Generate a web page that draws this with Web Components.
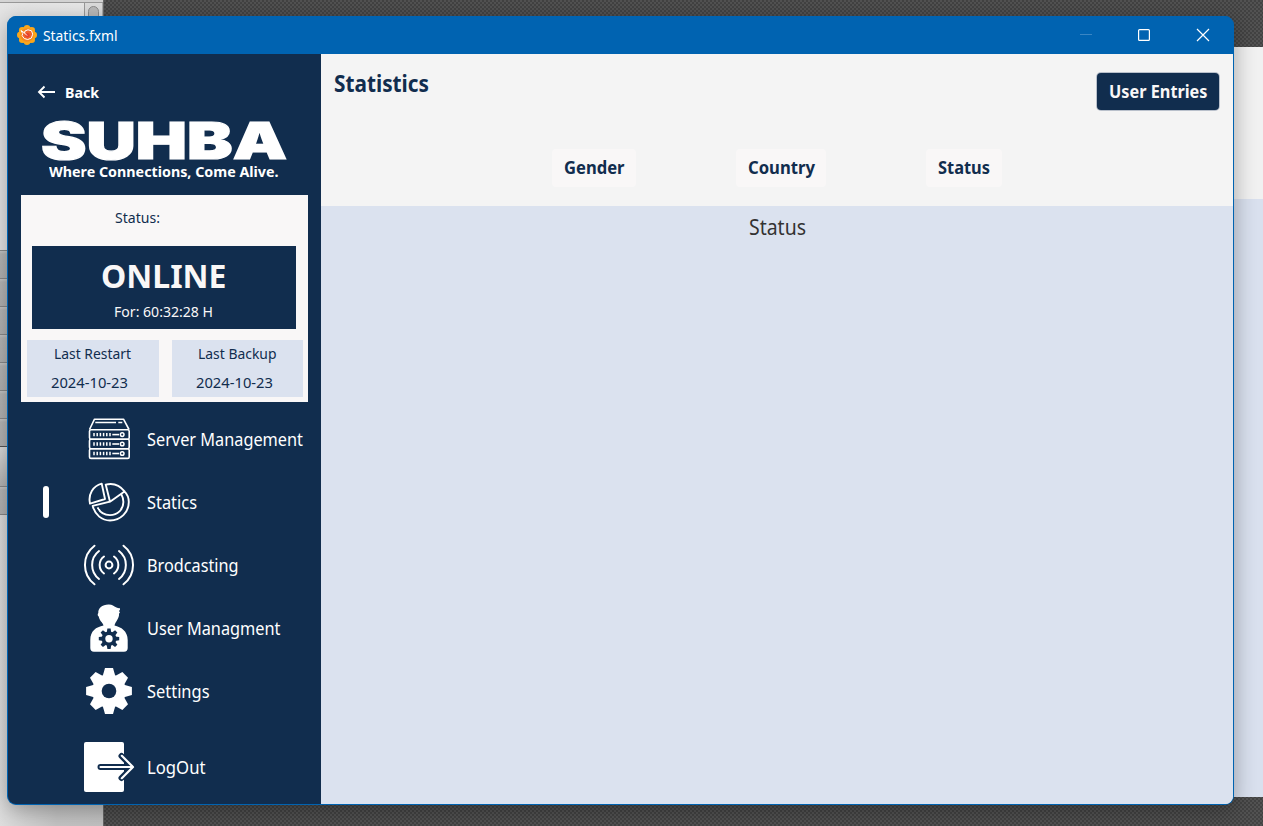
<!DOCTYPE html>
<html lang="en"><head><meta charset="utf-8"><title>Statics.fxml</title>
<style>html,body{margin:0;width:1263px;height:826px;overflow:hidden;font-family:"Noto Sans","Open Sans",sans-serif}</style></head>
<body>
<desk-top><app-window>
<title-bar slot="title"></title-bar>
<side-bar slot="side"></side-bar>
<stats-page slot="page"></stats-page>
</app-window></desk-top>
<script>
const define=(name,html,after)=>{
  const t=document.createElement('template');t.innerHTML=html;
  customElements.define(name,class extends HTMLElement{
    connectedCallback(){if(this.shadowRoot)return;
      this.attachShadow({mode:'open'}).append(t.content.cloneNode(true));
      if(after)after.call(this,this.shadowRoot);}
  });
};

/* One line of text, drawn to an exact width: w, size, weight, height */
define('fit-text',`<style>:host{display:block;white-space:nowrap;flex:none}span{display:inline-block;transform-origin:0 50%}</style><span><slot></slot></span>`,
function(r){
  const s=r.querySelector('span'),g=n=>this.getAttribute(n);
  this.style.width=g('w')+'px';
  this.style.fontSize=g('size')+'px';
  this.style.fontWeight=g('weight')||400;
  this.style.height=this.style.lineHeight=(g('h')||20)+'px';
  const n=s.offsetWidth?s.getBoundingClientRect().width:0;
  if(n)s.style.transform='scaleX('+(+g('w')/n)+')';
});

define('desk-top',`<style>
:host{display:grid;grid-template-columns:103px 1fr;width:1263px;height:826px;position:relative;overflow:hidden}
.left{display:flex;flex-direction:column;background:linear-gradient(90deg,#e2e2e2,#c8c8c8)}
.bar{height:2px;background:#d4d4d4;border-bottom:1px solid #999}
.top{height:247px;display:flex;justify-content:flex-end;background:linear-gradient(90deg,#e5e5e5,#e9e9e9)}
.scroll{width:19px;border-left:1px solid #999;border-right:1px solid #aaa;box-sizing:border-box;background:#ddd;display:flex;justify-content:center;padding-top:3px}
.thumb{width:9px;height:60px;border:1px solid #8c8c8c;border-radius:6px;background:#bbb}
.row{height:27px;border-top:1px solid #8b8b8b;background:linear-gradient(#c9c9c9,#b8b8b8 3px,#b3b3b3)}
.mid{height:39px;border-top:1px solid #555;background:linear-gradient(#ddd,#b5b5b5)}
.low{flex:1;border-top:1px solid #888;background:linear-gradient(90deg,#dedede,#c4c4c4 55%,#c2c2c2)}
.right{display:flex;flex-direction:column;align-items:flex-end;background-color:#474747;
 background-image:conic-gradient(#424242 25%,#525252 0 50%,#424242 0 75%,#525252 0);background-size:4px 4px;border-left:1px solid #666}
.gap{height:47px}.a{width:60px;height:152px;background:#f1f1f1}.b{width:60px;height:598px;background:#d9e0ee}
</style>
<div class="left"><div class="bar"></div><div class="top"><div class="scroll"><div class="thumb"></div></div></div>
<div class="row"></div><div class="row"></div><div class="row"></div><div class="row"></div><div class="row"></div><div class="row"></div><div class="row"></div>
<div class="mid"></div><div class="row"></div><div class="low"></div></div>
<div class="right"><div class="gap"></div><div class="a"></div><div class="b"></div></div><slot></slot>`);

define('app-window',`<style>
:host{position:absolute;left:7px;top:16px;width:1227px;height:789px;box-sizing:border-box;border:1px solid #0063b1;border-top:0;border-radius:9px;overflow:hidden;background:#0063b1;
display:grid;grid-template:38px 1fr/313px 1fr;box-shadow:0 5px 22px rgba(0,0,0,.32)}
.t{grid-column:1/3}
</style><div class="t"><slot name="title"></slot></div><slot name="side"></slot><slot name="page"></slot>`);

define('title-bar',`<style>
:host{display:flex;height:38px;align-items:center;background:#0063b1;color:#fff;padding-left:9px}
fit-text{margin:0 0 0 5.5px}svg{display:block}.logo{margin-top:0}.ctl{margin-left:auto}
</style>
<svg class="logo" width="20" height="20" viewBox="0 0 20 20"><g fill="#f9a61a"><circle cx="10" cy="10" r="8.6"/><circle cx="10" cy="3.2" r="3.2"/><circle cx="14.800" cy="5.200" r="3.2"/><circle cx="16.800" cy="10" r="3.2"/><circle cx="14.800" cy="14.800" r="3.2"/><circle cx="10" cy="16.800" r="3.2"/><circle cx="5.200" cy="14.800" r="3.2"/><circle cx="3.200" cy="10" r="3.2"/><circle cx="5.200" cy="5.200" r="3.2"/></g><circle cx="10" cy="10" r="6.8" fill="#f58a20"/><path d="M4 5.5 7.5 8 8 6l3-1.200 3.500 1 1.200 3.400-1.300 3.800-3.600 1.500-3.500-1-2.200-2.800.6-2.200z" fill="#f0642a" stroke="#fff" stroke-width="1"/><circle cx="10.500" cy="10.200" r="2.200" fill="#e6402e"/><path d="m7.500 8 2.500 2.500" stroke="#fff"/></svg>
<fit-text w="74.5" size="14.6">Statics.fxml</fit-text>
<svg class="ctl" width="154" height="38" fill="none" stroke="#fff"><path d="M1 18.5h12" stroke="#3a86c4"/><rect x="59.6" y="13.6" width="10.8" height="10.8" rx="1" stroke-width="1.2"/><path d="m118 13 12 12m0-12-12 12" stroke-width="1.2"/></svg>`);

define('side-bar',`<style>
:host{display:flex;flex-direction:column;background:#112d4e;color:#fff;height:750px}
.back{display:flex;align-items:center;padding:28px 0 0 29px;height:20px}
.back svg{margin-right:9px}
.brand{height:43px;margin:17px 0 0 33px}
.tag{margin:-1px 0 0 41px}
status-card{margin:14px 0 0 13px}
nav{margin-top:6px}.out{margin-top:13px}
</style>
<div class="back"><svg width="19" height="14" viewBox="0 0 19 14" fill="none" stroke="#fff" stroke-width="1.9"><path d="M18 7H2M7.500 1.500 2 7l5.500 5.500"/></svg><fit-text w="34" size="14.600" weight="700">Back</fit-text></div>
<brand-name class="brand"></brand-name>
<fit-text class="tag" w="229.500" size="14.6" weight="700">Where Connections, Come Alive.</fit-text>
<status-card></status-card>
<nav>
<nav-item icon="server"><fit-text w="156" size="17.6" h="24">Server Management</fit-text></nav-item>
<nav-item icon="pie" active><fit-text w="50" size="17.6" h="24">Statics</fit-text></nav-item>
<nav-item icon="cast"><fit-text w="91.500" size="17.6" h="24">Brodcasting</fit-text></nav-item>
<nav-item icon="user"><fit-text w="133.500" size="17.6" h="24">User Managment</fit-text></nav-item>
<nav-item icon="gear"><fit-text w="62.500" size="17.6" h="24">Settings</fit-text></nav-item>
<nav-item class="out" icon="exit"><fit-text w="58.500" size="17.6" h="24">LogOut</fit-text></nav-item>
</nav>`);

define('brand-name',`<style>:host{display:block;font-family:Inter,sans-serif;-webkit-text-stroke:1.2px #fff}</style><fit-text w="246" size="51.5" weight="900" h="43">SUHBA</fit-text>`);

define('status-card',`<style>
:host{display:flex;flex-direction:column;box-sizing:border-box;width:287px;height:207px;background:#f9f7f7;color:#112d4e}
.lab{margin:12px 0 0 93.500px}
.on{margin:19px 0 0 11px;width:264px;height:83px;background:#112d4e;color:#f9f7f7}
.on .big{padding:10px 0 0 69px}.on .for{padding:5px 0 0 81.500px}
.two{display:flex;gap:13px;padding:11px 0 0 6px}
.two div{width:132px;height:57px;background:#dbe2ef;box-sizing:border-box;padding-top:3px}
.two div+div{width:131px}
.l{margin:0 0 0 26.500px}.d{margin:9px 0 0 23.500px}
</style>
<fit-text class="lab" w="45" size="14.6">Status:</fit-text>
<div class="on"><fit-text class="big" w="125.500" size="33" weight="700" h="40">ONLINE</fit-text><fit-text class="for" w="99" size="14.6">For: 60:32:28 H</fit-text></div>
<div class="two"><div><fit-text class="l" w="77" size="14.6">Last Restart</fit-text><fit-text class="d" w="77" size="14.6">2024-10-23</fit-text></div>
<div><fit-text class="l" style="margin-left:25.500px" w="78.5" size="14.6">Last Backup</fit-text><fit-text class="d" w="77" size="14.6">2024-10-23</fit-text></div></div>`);

const teeth=(p)=>[0,45,90,135,180,225,270,315].map(a=>`<path d="${p}" transform="rotate(${a})"/>`).join('');
const ticks=y=>[10,13.2,16.4,19.6,22.8,26].map(x=>`<path d="M${x} ${y-1.7}v3.4" stroke-width="1.5"/>`).join('')+`<path d="M28.3 ${y}H35"/><circle cx="38.2" cy="${y}" r="1.8" stroke-width="1.5"/>`;
const icons={
server:`<g fill="none" stroke="#fff" stroke-width="1.600" stroke-linejoin="round"><path d="M5.500 21.500 10.500 11.200H39.500L45 21.500M11.300 14.500H32M34.300 14.500h4"/><rect x="5.500" y="21.700" width="39.700" height="9.500" rx="1.5"/><rect x="5.500" y="31.200" width="39.700" height="9.500" rx="1.500"/><rect x="5.500" y="40.700" width="39.700" height="9.700" rx="1.500"/>${ticks(26.6)+ticks(36)+ticks(45.500)}</g>`,
pie:`<g fill="none" stroke="#fff" stroke-width="1.900" stroke-linejoin="round"><path d="M17.700 12.600 21 28 6 32.600C3.900 23 9 15 17.700 12.600ZM21.700 13.600 26 30.700 40.500 20.400C36 14.500 29 11.800 21.700 13.600ZM26 30.700 8.700 34.900C11 44 18 49.500 26 49.500 36.500 49.500 44.800 41.500 44.800 31 44.800 27 43 23 40.500 20.400ZM13.600 36.300C16 41.500 20.500 44.100 26 44.100 33.500 44.100 39.400 38.500 39.400 31 39.400 28.400 38.700 25.800 37.500 23.600"/></g>`,
cast:`<g fill="none" stroke="#fff" stroke-width="2" stroke-linecap="round"><circle cx="25" cy="31" r="3.400"/><path d="M20 22.500A10.500 10.500 0 0 0 20 39.500M30 22.500A10.500 10.500 0 0 1 30 39.500M15 17A17.700 17.700 0 0 0 15 45M35 17A17.700 17.700 0 0 1 35 45M10.500 11.700A24.300 24.300 0 0 0 10.500 50.300M39.500 11.700A24.300 24.300 0 0 1 39.500 50.300"/></g>`,
user:`<path fill="#fff" d="M24.500 7.400C28 7.200 30 9.200 32 10.300 33.500 11.300 34.700 11.200 36 11.300 36.200 12.600 35.700 13.600 34.900 14.100L36 15.200 35 16.700C35.600 21 31.500 24.500 30.500 28.500 37 30 43.700 34 43.700 43V51Q43.700 54.700 40 54.700H10Q6.300 54.700 6.300 51V43C6.300 34 12 30 19.500 28.500 18.500 25 15.500 24 14.700 19.500 13.300 18.500 13.600 17 14.300 16 14 11 18 7.500 24.500 7.400Z"/><g transform="translate(25 41.700)" fill="#112d4e"><circle r="7.300"/>${teeth('M-2.300-6-1.600-10.200H1.600L2.300-6Z')}<circle r="3.700" fill="#fff"/></g>`,
gear:`<g transform="translate(25 31)" fill="#fff"><circle r="16.800"/>${teeth('M-6.300-15-4-22.900H4L6.300-15Z')}<circle r="7.300" fill="#112d4e"/></g>`,
exit:`<rect y="6" width="40" height="50" rx="2" fill="#fff"/><g fill="none" stroke-linecap="round" stroke-linejoin="round"><path d="M16.500 31H48M37.500 20 48.500 31 37.500 42" stroke="#112d4e" stroke-width="6"/><path d="M16.500 31H48.500M37.800 19.800 49 31 37.800 42.200" stroke="#fff" stroke-width="2.200"/></g>`
};
define('nav-item',`<style>
:host{display:flex;height:63px;align-items:center}
.mark{width:6px;height:32px;margin:-2px 35px 0;border-radius:3px;background:transparent}
:host([active]) .mark{background:#fff}
svg{display:block;margin-right:13px;overflow:visible}
::slotted(*){margin-top:-2px}
</style><div class="mark"></div><svg width="50" height="63" viewBox="0 0 50 63"></svg><slot></slot>`,
function(r){r.querySelector('svg').innerHTML=icons[this.getAttribute('icon')];});

define('push-button',`<style>
:host{display:flex;box-sizing:border-box;height:38px;padding:6px 0 0 11.500px;border-radius:4px;background:#f9f7f7;color:#112d4e}
:host([dark]){background:#112d4e;color:#f9f7f7;box-shadow:0 0 0 1px #b9c0cb;height:37px}
</style><slot></slot>`);

define('stats-page',`<style>
:host{display:flex;flex-direction:column;background:#f4f4f4;height:750px;color:#112d4e}
.head{display:flex;height:95px;align-items:flex-start;justify-content:space-between;padding:0 14px 0 12.500px}
.head fit-text.h{margin-top:14px}.head push-button{width:122px;margin-top:19px}
.tabs{display:flex;gap:100px;padding-left:231px;height:57px}
.chart{flex:1;background:#dbe2ef;color:#333;padding:5px 0 0 427.500px}
</style>
<div class="head"><fit-text class="h" w="95" size="22.500" weight="700" h="32">Statistics</fit-text><push-button dark><fit-text w="98.500" size="17.800" weight="700" h="25">User Entries</fit-text></push-button></div>
<div class="tabs"><push-button style="width:84px"><fit-text w="60.500" size="17.800" weight="700" h="25">Gender</fit-text></push-button>
<push-button style="width:90px"><fit-text w="67" size="17.800" weight="700" h="25">Country</fit-text></push-button>
<push-button style="width:76px"><fit-text w="52" size="17.800" weight="700" h="25">Status</fit-text></push-button></div>
<div class="chart"><fit-text w="57" size="21" h="32">Status</fit-text></div>`);
</script></body></html>
